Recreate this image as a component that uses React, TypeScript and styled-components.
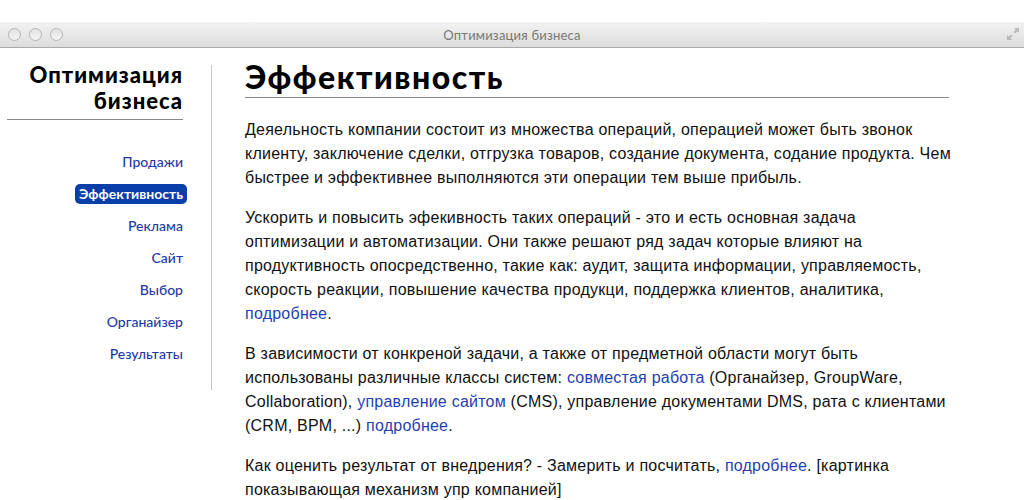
import React from 'react'
import styled, { createGlobalStyle } from 'styled-components'

const GlobalStyle = createGlobalStyle`
  html, body {
    margin: 0;
    padding: 0;
    background: #fff;
  }
  body {
    font-family: 'Liberation Sans', Arial, sans-serif;
  }
`

const navItems = ['Продажи', 'Эффективность', 'Реклама', 'Сайт', 'Выбор', 'Органайзер', 'Результаты']

const App: React.FC = () => {
  return (
    <>
      <GlobalStyle />
      <Page>
        <TitleBar>
          <Lights>
            <Light />
            <Light />
            <Light />
          </Lights>
          <WindowTitle>Оптимизация бизнеса</WindowTitle>
          <Resize>
            <svg width="14" height="14" viewBox="0 0 14 14">
              <path d="M8 1h5v5L11.3 4.3 9 6.6 7.4 5 9.7 2.7z" fill="#b9b9b9" />
              <path d="M6 13H1V8l1.7 1.7L5 7.4 6.6 9 4.3 11.3z" fill="#b9b9b9" />
            </svg>
          </Resize>
        </TitleBar>
        <Body>
          <Sidebar>
            <Brand>Оптимизация бизнеса</Brand>
            <Nav>
              {navItems.map(item => (
                <NavLink key={item} href="#" active={item === 'Эффективность'}>
                  {item}
                </NavLink>
              ))}
            </Nav>
          </Sidebar>
          <Main>
            <Heading>Эффективность</Heading>
            <Paragraph>
              Деяельность компании состоит из множества операций, операцией может быть звонок клиенту,
              заключение сделки, отгрузка товаров, создание документа, содание продукта. Чем быстрее и
              эффективнее выполняются эти операции тем выше прибыль.
            </Paragraph>
            <Paragraph>
              Ускорить и повысить эфекивность таких операций - это и есть основная задача оптимизации и
              автоматизации. Они также решают ряд задач которые влияют на продуктивность опосредственно,
              такие как: аудит, защита информации, управляемость, скорость реакции, повышение качества
              продукци, поддержка клиентов, аналитика, <TextLink href="#">подробнее</TextLink>.
            </Paragraph>
            <Paragraph>
              В зависимости от конкреной задачи, а также от предметной области могут быть использованы
              различные классы систем: <TextLink href="#">совместая работа</TextLink> (Органайзер,
              GroupWare, Collaboration), <TextLink href="#">управление сайтом</TextLink> (CMS),
              управление документами DMS, рата с клиентами (CRM, BPM, ...){' '}
              <TextLink href="#">подробнее</TextLink>.
            </Paragraph>
            <Paragraph>
              Как оценить результат от внедрения? - Замерить и посчитать,{' '}
              <TextLink href="#">подробнее</TextLink>. [картинка показывающая механизм упр компанией]
            </Paragraph>
          </Main>
        </Body>
      </Page>
    </>
  )
}

const Page = styled.div`
  padding-top: 22px;
  height: 500px;
  box-sizing: border-box;
  overflow: hidden;
`

const TitleBar = styled.div`
  position: relative;
  height: 25px;
  display: flex;
  align-items: center;
  justify-content: center;
  background: linear-gradient(to bottom, #f3f3f3, #dcdcdc);
  border-bottom: 1px solid #a9a9a9;
`

const Lights = styled.div`
  position: absolute;
  left: 8px;
  top: 6px;
  display: flex;
  gap: 8px;
`

const Light = styled.span`
  width: 11px;
  height: 11px;
  border-radius: 50%;
  border: 1px solid #b4b4b4;
  background: linear-gradient(to bottom, #e2e2e2, #f4f4f4);
`

const WindowTitle = styled.div`
  font-family: 'Lato', 'Open Sans', sans-serif;
  font-size: 13px;
  color: #777;
  letter-spacing: 0.2px;
`

const Resize = styled.div`
  position: absolute;
  right: 4px;
  top: 5px;
  display: flex;
`

const Body = styled.div`
  display: flex;
  align-items: flex-start;
  padding: 17px 0 0 7px;
`

const Sidebar = styled.aside`
  width: 176px;
  padding-right: 28px;
  border-right: 1px solid #c9c9c9;
  padding-bottom: 26px;
  text-align: right;
  flex-shrink: 0;
`

const Brand = styled.h2`
  margin: -3px 0 0;
  padding: 0 0 5px;
  font-family: 'Lato', 'Inter', sans-serif;
  font-weight: 900;
  font-size: 22px;
  line-height: 26px;
  letter-spacing: 1px;
  color: #000;
  border-bottom: 1px solid #888;
`

const Nav = styled.nav`
  display: flex;
  flex-direction: column;
  align-items: flex-end;
  gap: 12px;
  padding-top: 32px;
`

const NavLink = styled.a<{ active?: boolean }>`
  font-family: 'Lato', 'Open Sans', sans-serif;
  font-size: 14px;
  line-height: 20px;
  text-decoration: none;
  border-radius: 5px;
  padding: 0 4px;
  margin-right: -4px;
  color: ${p => (p.active ? '#fff' : '#1e3aa6')};
  background: ${p => (p.active ? '#0a3ea8' : 'transparent')};
  font-weight: ${p => (p.active ? 700 : 500)};
`

const Main = styled.main`
  padding-left: 33px;
  width: 704px;
`

const Heading = styled.h1`
  margin: -5px 0 20px;
  font-family: 'Lato', 'Inter', sans-serif;
  font-weight: 900;
  font-size: 32px;
  line-height: 34px;
  letter-spacing: 1.5px;
  padding-bottom: 3px;
  color: #000;
  border-bottom: 1px solid #888;
`

const Paragraph = styled.p`
  margin: 0 -5px 16px 0;
  font-size: 16px;
  line-height: 24px;
  letter-spacing: 0.23px;
  color: #111;
`

const TextLink = styled.a`
  color: #1f3fb0;
  text-decoration: none;
`

export default App
